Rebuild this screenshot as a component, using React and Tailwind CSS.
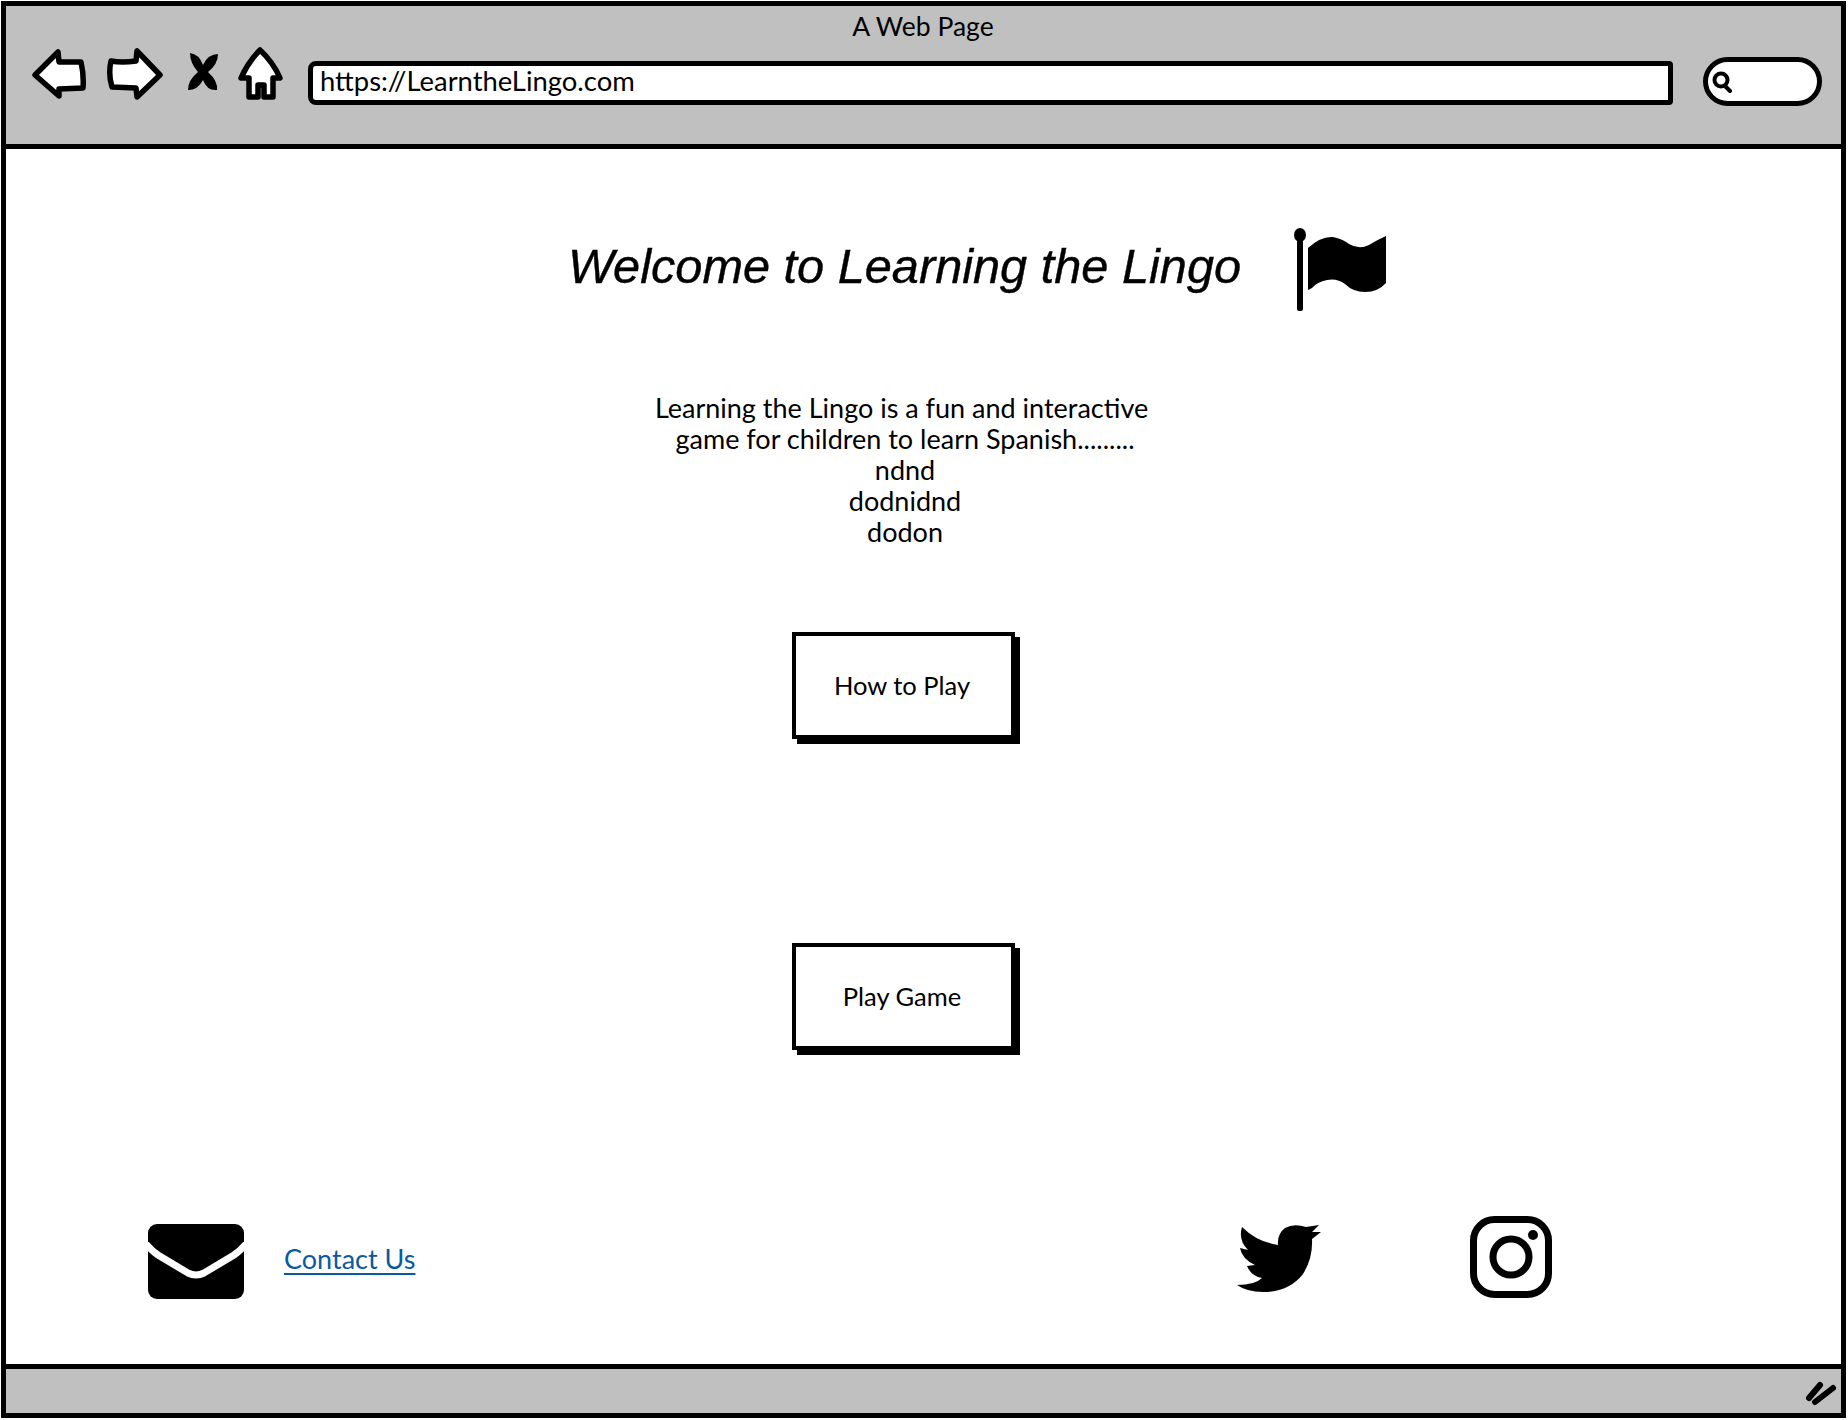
import React from 'react';

const sketchFont = "font-['Lato','Noto_Sans',sans-serif]";

const BackIcon = () => (
  <svg width="55" height="50" viewBox="0 0 55 50" className="block shrink-0 mt-[2px]">
    <path d="M3 26 L26 3 L27 13 L49 13 Q52 26 51 39 L27 40 L27 47 Z" fill="#fff" stroke="#000" strokeWidth="5.5" strokeLinejoin="round" />
  </svg>
);

const ForwardIcon = () => (
  <svg width="57" height="52" viewBox="0 0 57 52" className="block shrink-0 mt-[1px]">
    <path d="M54 27 L31 3 L30 13 Q16 15 5 13 Q2 26 6 39 L30 40 L31 49 Z" fill="#fff" stroke="#000" strokeWidth="5.5" strokeLinejoin="round" />
  </svg>
);

const CloseIcon = () => (
  <svg width="32" height="38" viewBox="0 0 32 38" className="block shrink-0 mt-[6px]">
    <path d="M3 0 Q12 1 16 12 Q21 1 31 1 Q31 11 21 19 Q31 28 30 37 Q20 38 16 27 Q11 37 1 37 Q1 27 11 19 Q3 10 3 0 Z" fill="#000" />
  </svg>
);

const HomeIcon = () => (
  <svg width="45" height="53" viewBox="0 0 45 53" className="block shrink-0">
    <path d="M22 3 Q35 15 42 31 L35 31 L35 50 L26 50 L26 38 L20 38 L20 50 L11 50 L11 31 L3 31 Q10 15 22 3 Z" fill="#fff" stroke="#000" strokeWidth="5.5" strokeLinejoin="round" />
  </svg>
);

const FlagIcon = () => (
  <svg width="94" height="83" viewBox="0 0 94 83" className="block shrink-0">
    <ellipse cx="7" cy="7" rx="6" ry="7" fill="#000" />
    <rect x="4" y="12" width="6" height="71" rx="2" fill="#000" />
    <path d="M15 20 Q28 8 40 9 Q50 11 56 16 Q66 22 76 17 Q86 11 93 8 L93 55 Q85 64 72 64 Q60 64 52 56 Q44 50 34 52 Q24 54 19 60 L15 62 Z" fill="#000" />
  </svg>
);

const MailIcon = () => (
  <svg width="96" height="75" viewBox="0 0 96 75" className="block shrink-0 mt-[8px]">
    <rect width="96" height="75" rx="9" fill="#000" />
    <path d="M-2 20 Q4 27 10 31 L40 49 Q48 53 56 49 L86 31 Q92 27 98 20" fill="none" stroke="#fff" strokeWidth="7" />
  </svg>
);

const TwitterIcon = () => (
  <svg width="85" height="70" viewBox="0 0 85 70" className="block shrink-0 mt-[7px]">
    <path d="M5 4 Q20 19 41 22 Q40 11 48 5 Q57 0 69 4 L82 2 L75 9 L84 9 L75 16 Q76 35 66 51 Q52 69 26 69 Q10 69 0 62 Q18 62 25 55 Q14 53 10 43 L18 42 Q5 36 3 25 L11 27 Q1 17 5 4 Z" fill="#000" />
  </svg>
);

const InstagramIcon = () => (
  <svg width="82" height="82" viewBox="0 0 82 82" className="block shrink-0">
    <rect x="3.5" y="3.5" width="75" height="75" rx="21" fill="none" stroke="#000" strokeWidth="7" />
    <circle cx="41" cy="41" r="18" fill="none" stroke="#000" strokeWidth="7" />
    <circle cx="63" cy="19" r="5" fill="#000" />
  </svg>
);

const SearchIcon = () => (
  <svg width="20" height="22" viewBox="0 0 20 22" className="block shrink-0">
    <circle cx="9" cy="9" r="6.5" fill="none" stroke="#000" strokeWidth="4" />
    <path d="M13 15 L18 20" stroke="#000" strokeWidth="4" strokeLinecap="round" />
  </svg>
);

const SketchButton = ({ label }) => (
  <button className={`w-[223px] h-[107px] bg-white border-4 border-black shadow-[5px_5px_0_0_#000] flex items-center justify-center text-black text-[25.5px] pr-[3px] pb-[1px] ${sketchFont}`}>
    {label}
  </button>
);

export default function App() {
  return (
    <div className={`w-[1848px] h-[1420px] bg-white p-[1px] text-black ${sketchFont}`}>
      <div className="w-[1845px] h-[1417px] border-[5px] border-black flex flex-col">
        <header className="h-[143px] shrink-0 bg-[#c0c0c0] border-b-[5px] border-black flex flex-col">
          <div className="h-[41px] pt-[5px] text-center text-[26.5px] leading-[30px] pr-[1px]">A Web Page</div>
          <div className="flex items-start pl-[26px] h-[56px]">
            <BackIcon />
            <div className="ml-[19px]"><ForwardIcon /></div>
            <div className="ml-[24px]"><CloseIcon /></div>
            <div className="ml-[19px]"><HomeIcon /></div>
            <div className="ml-[25px] mt-[14px] w-[1365px] h-[44px] shrink-0 bg-white border-[5px] border-black rounded-l-[8px] rounded-r-[4px] pl-[7px] text-[27.4px] leading-[30px]">
              https://LearntheLingo.com
            </div>
            <div className="ml-[30px] mt-[10px] w-[119px] h-[49px] shrink-0 bg-white border-[5px] border-black rounded-[26px] pl-[4px] flex items-center">
              <SearchIcon />
            </div>
          </div>
        </header>

        <main className="flex-1 flex flex-col">
          <div className="flex items-center pl-[562px] pt-[79px]">
            <h1 className="font-['Liberation_Sans',sans-serif] italic font-normal text-[48.7px] leading-[56px] w-[725px] -mt-[7px] [-webkit-text-stroke:0.4px_black]">
              Welcome to Learning the Lingo
            </h1>
            <FlagIcon />
          </div>

          <div className="w-[1798px] flex flex-col items-center">
            <p className="mt-[81px] text-center text-[27px] leading-[31px]">
              Learning the Lingo is a fun and interactive&nbsp;<br />
              game for children to learn Spanish.........<br />
              ndnd<br />
              dodnidnd<br />
              dodon
            </p>
            <div className="mt-[85px] -ml-[3px]"><SketchButton label="How to Play" /></div>
            <div className="mt-[204px] -ml-[3px]"><SketchButton label="Play Game" /></div>
          </div>

          <footer className="flex items-start justify-between pl-[142px] pr-[289px] mt-[166px]">
            <div className="flex items-start">
              <MailIcon />
              <a className="ml-[40px] mt-[28px] text-[27px] leading-[30px] text-[#0a5aa0] underline underline-offset-4">Contact Us</a>
            </div>
            <div className="flex items-start gap-[148px]">
              <TwitterIcon />
              <InstagramIcon />
            </div>
          </footer>
        </main>

        <div className="h-[49px] shrink-0 bg-[#c0c0c0] border-t-[5px] border-black flex items-center justify-end pr-[4px]">
          <svg width="32" height="25" viewBox="0 0 32 25" className="block shrink-0 mt-[5px]">
            <path d="M4 17 L15 4 M10 21 L28 7" stroke="#000" strokeWidth="6" strokeLinecap="round" />
          </svg>
        </div>
      </div>
    </div>
  );
}
